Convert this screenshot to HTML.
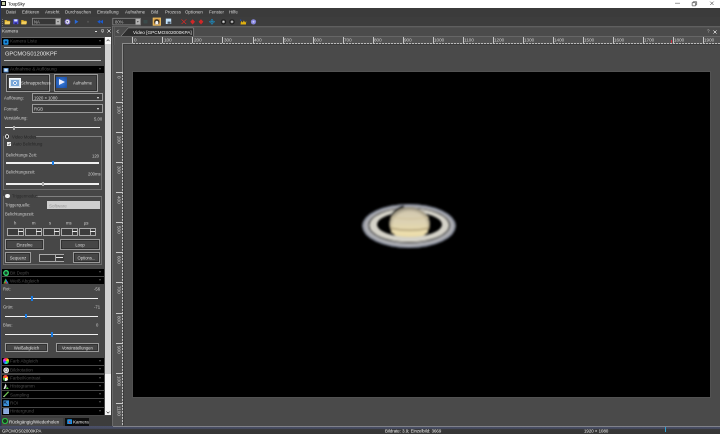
<!DOCTYPE html>
<html><head><meta charset="utf-8">
<style>
*{margin:0;padding:0;box-sizing:border-box}
html,body{width:720px;height:434px;overflow:hidden;background:#4b4b4b;font-family:"Liberation Sans",sans-serif;color:#ddd}
.a{position:absolute}
.t{position:absolute;white-space:nowrap;line-height:1;will-change:transform;transform-origin:0 0;transform:scale(.5)}
.hdr{position:absolute;left:2px;width:102px;height:7.2px;background:#000}
.hdr .t{color:#4a4a4a;font-size:9.2px;left:7.5px;top:1.5px}
.hdr .ar{position:absolute;right:3px;top:2px;width:0;height:0;border-left:1.5px solid transparent;border-right:1.5px solid transparent;border-top:2px solid #555}
.btn{position:absolute;border:1px solid #9a9a9a;background:#464646;box-shadow:inset 0 0 0 1px #303030}
.btn .t{width:200%;text-align:center;color:#ddd;font-size:8.4px}
.trk{position:absolute;height:1.3px;background:#f0f0f0}
.lbl{position:absolute;will-change:transform;transform-origin:0 0;transform:scale(.5);white-space:nowrap;line-height:1;font-size:8.4px;color:#cfcfcf}
</style></head><body><div id="root" class="a" style="left:0;top:0;width:720px;height:434px">
<!-- title bar -->
<div class="a" style="left:0;top:0;width:720px;height:8px;background:#fff"></div>
<div class="a" style="left:1.2px;top:1.2px;width:4.6px;height:4.6px;background:#111"></div>
<div class="a" style="left:2.3px;top:2.3px;width:2.4px;height:2.4px;background:#c8d0a8"></div>
<div class="t" style="left:8.3px;top:1.6px;font-size:8.80px;color:#2a2a2a;-webkit-text-stroke:0.15px #2a2a2a">ToupSky</div>
<svg class="a" style="left:670px;top:0" width="50" height="8">
  <path d="M5 3.3 h5" stroke="#555" stroke-width="0.6"/>
  <path d="M22.2 2.6 h3.4 v3.2 h-3.4z" stroke="#444" stroke-width="0.65" fill="none"/>
  <path d="M23.2 2.6 v-0.9 h3.4 v3.2 h-1" stroke="#444" stroke-width="0.65" fill="none"/>
  <path d="M40.2 1.6 l3.4 3.4 M43.6 1.6 l-3.4 3.4" stroke="#444" stroke-width="0.65"/>
</svg>
<!-- menu + toolbar -->
<div class="a" style="left:0;top:8px;width:720px;height:9px;background:#3b3b3b"></div>
<div class="a" style="left:0;top:17px;width:720px;height:10px;background:#3d3d3d"></div>
<div class="a" style="left:0;top:0;width:1.2px;height:426px;background:#25335e"></div>
<div class="t" style="top:9.9px;left:6px;font-size:8.60px;color:#d8d8d8">Datei</div>
<div class="t" style="top:9.9px;left:22px;font-size:8.80px;color:#d8d8d8">Editieren</div>
<div class="t" style="top:9.9px;left:45px;font-size:8.80px;color:#d8d8d8">Ansicht</div>
<div class="t" style="top:9.9px;left:65px;font-size:8.80px;color:#d8d8d8">Durchsuchen</div>
<div class="t" style="top:9.9px;left:97px;font-size:8.80px;color:#d8d8d8">Einstellung</div>
<div class="t" style="top:9.9px;left:125px;font-size:8.80px;color:#d8d8d8">Aufnahme</div>
<div class="t" style="top:9.9px;left:151px;font-size:8.80px;color:#d8d8d8">Bild</div>
<div class="t" style="top:9.9px;left:164.5px;font-size:8.80px;color:#d8d8d8">Prozess</div>
<div class="t" style="top:9.9px;left:185px;font-size:8.80px;color:#d8d8d8">Optionen</div>
<div class="t" style="top:9.9px;left:209px;font-size:8.80px;color:#d8d8d8">Fenster</div>
<div class="t" style="top:9.9px;left:229px;font-size:8.80px;color:#d8d8d8">Hilfe</div>

<!-- toolbar icons -->
<div class="a" style="left:2px;top:18.5px;width:0.8px;height:7px;background:repeating-linear-gradient(#777 0 1px,transparent 1px 2px)"></div>
<svg class="a" style="left:0;top:15px" width="270" height="13" viewBox="0 15 270 13">
  <!-- folder -->
  <path d="M4.6 20 h2 l0.8 0.8 h2.4 v3.4 h-5.2z" fill="#d8a820"/><path d="M5.2 21.6 h5.2 l-0.8 2.6 h-4.8z" fill="#f4d060"/>
  <!-- save -->
  <rect x="13.2" y="19.2" width="5.2" height="5" fill="#5050d8"/><rect x="14.2" y="19.4" width="3.2" height="2" fill="#e0e8ff"/><rect x="14.6" y="22.6" width="2.4" height="1.6" fill="#2a2a80"/>
  <!-- folder 2 -->
  <path d="M21.2 20 h2 l0.8 0.8 h2.4 v3.4 h-5.2z" fill="#d8a820"/><path d="M21.8 21.6 h5.2 l-0.8 2.6 h-4.8z" fill="#f4d060"/>
  <!-- combo NA -->
  <rect x="32.5" y="18.3" width="28" height="6.6" fill="#373737" stroke="#8c8c8c" stroke-width="0.8"/>
  <rect x="55.6" y="18.8" width="4.6" height="5.8" fill="#b4b4b4"/>
  <path d="M57 21.3 h2 l-1 1.2z" fill="#333"/>
  <!-- circle icon -->
  <circle cx="67.5" cy="21.8" r="2.5" fill="#e8e8f4" stroke="#7060c8" stroke-width="0.9"/><circle cx="67.3" cy="21.8" r="0.8" fill="#505070"/>
  <!-- play -->
  <path d="M74.8 19.6 l3.6 2.2 l-3.6 2.3z" fill="#2a6ad8"/>
  <circle cx="88" cy="21.8" r="1" fill="#555"/>
  <!-- rewind -->
  <path d="M97.2 21.8 l3 -2 v4z M100 21.8 l3 -2 v4z" fill="#1a5ad0"/>
  <!-- combo 80 -->
  <rect x="112.8" y="18.3" width="27.6" height="6.6" fill="#373737" stroke="#8c8c8c" stroke-width="0.8"/>
  <rect x="135.5" y="18.8" width="4.6" height="5.8" fill="#b4b4b4"/>
  <path d="M136.8 21.3 h2 l-1 1.2z" fill="#333"/>
  <rect x="143.5" y="20" width="4" height="3.5" fill="#3a4a4a"/>
  <!-- orange highlighted -->
  <rect x="152.7" y="17.6" width="8.2" height="8.1" fill="#f0c060"/>
  <rect x="153.7" y="18.6" width="6.2" height="6.1" fill="#c89040"/>
  <circle cx="156.8" cy="21.8" r="2.6" fill="#3a3020"/>
  <path d="M155.3 24.4 v-2.2 a1.5 1.5 0 0 1 3 0 v2.2z" fill="#f4f4f4"/>
  <!-- light blue icon -->
  <rect x="165.8" y="18.6" width="5.4" height="5.4" fill="#c0e0fa"/><rect x="167.6" y="21.6" width="3" height="2.2" fill="#4a5868"/>
  <!-- red x -->
  <path d="M181.6 19.4 l4.6 4.6 M186.2 19.4 l-4.6 4.6" stroke="#d02828" stroke-width="1"/>
  <path d="M192.6 19.2 l2.4 2.6 l-2.4 2.6 l-2.4 -2.6z" fill="#d02828"/>
  <path d="M201 19.2 l2.4 2.6 l-2.4 2.6 l-2.4 -2.6z" fill="#d02828"/>
  <!-- blue cross -->
  <path d="M212 18.8 l1.4 1.6 h-2.8z M212 24.8 l1.4 -1.6 h-2.8z M209 21.8 l1.6 -1.4 v2.8z M215 21.8 l-1.6 -1.4 v2.8z" fill="#1a90c8"/><rect x="211.2" y="21" width="1.6" height="1.6" fill="#1a90c8"/>
  <circle cx="223.5" cy="21.8" r="2.1" fill="#888" stroke="#1e1e1e" stroke-width="1.1"/><circle cx="223.5" cy="21.8" r="0.7" fill="#ddd"/>
  <circle cx="232" cy="21.8" r="2.1" fill="#888" stroke="#1e1e1e" stroke-width="1.1"/><circle cx="232" cy="21.8" r="0.7" fill="#ddd"/>
  <!-- yellow crown -->
  <path d="M240.5 24.6 l0.6 -3.6 l1.6 1.4 l1.2 -2 l1.2 2 l1.2 -1.4 l-0.4 3.6z" fill="#e0b010"/>
  <rect x="240" y="19.6" width="1.2" height="1.2" fill="#2050c0"/>
  <circle cx="253.5" cy="21.8" r="2.6" fill="#8888e0"/><circle cx="253.5" cy="21.8" r="1" fill="#c8c8f8"/>
</svg>
<div class="t" style="left:34px;top:19.8px;font-size:8.40px;color:#bbb">NA</div>
<div class="t" style="left:114.5px;top:19.8px;font-size:8.40px;color:#bbb">80%</div>
<!-- left panel -->
<div class="a" style="left:1.5px;top:26.5px;width:111px;height:399px;background:#474747"></div>
<div class="a" style="left:1.5px;top:26.5px;width:111px;height:1px;background:#6a6a6a"></div>
<div class="t" style="left:1.5px;top:29.2px;font-size:9.20px;color:#ddd">Kamera</div>
<div class="a" style="left:94.7px;top:30.6px;width:2.6px;height:1.2px;background:#e0e0e0"></div>
<svg class="a" style="left:100.5px;top:29px" width="3.5" height="4"><path d="M0.6 0.6 h2 v2.2 h-2z M1.6 2.8 v1" stroke="#bbb" stroke-width="0.7" fill="none"/></svg>
<svg class="a" style="left:106.6px;top:29.2px" width="4" height="4"><path d="M0.4 0.4 l3.2 3.2 M3.6 0.4 l-3.2 3.2" stroke="#e0e0e0" stroke-width="0.8"/></svg>
<div class="a" style="left:1.5px;top:36.5px;width:111px;height:1px;background:#6a6a6a"></div>

<!-- scrollbar -->
<div class="a" style="left:104.9px;top:37px;width:6.2px;height:378px;background:#f6f6f6"></div>
<div class="a" style="left:104.9px;top:43.7px;width:6.2px;height:330.8px;background:#d2d2d2"></div>
<svg class="a" style="left:104.9px;top:37px" width="6.2" height="6.6"><path d="M1.6 4.2 L3.1 2.6 L4.6 4.2" stroke="#555" stroke-width="1" fill="none"/></svg>
<svg class="a" style="left:104.9px;top:408.5px" width="6.2" height="6.6"><path d="M1.6 2.6 L3.1 4.2 L4.6 2.6" stroke="#555" stroke-width="1" fill="none"/></svg>
<div class="a" style="left:111px;top:27px;width:2px;height:399px;background:#3a3a3a"></div>


<!-- ===== left panel content ===== -->
<div class="hdr" style="top:37.80px"><svg class="a" style="left:0.8px;top:0.8px" width="6" height="6"><rect x="0.3" y="0.3" width="5.2" height="5.4" rx="1" fill="#1e90e0"/><circle cx="2.9" cy="3" r="1.2" fill="#0a3a70"/></svg><div class="t">Kamera Liste</div><div class="ar"></div></div>
<div class="a" style="left:4.3px;top:47px;width:96.7px;height:1px;background:#bdbdbd"></div>
<div class="t" style="left:4.5px;top:51.2px;font-size:11.4px;color:#e8e8e8">GPCMOS01200KPF</div>
<div class="a" style="left:4.3px;top:60px;width:96.7px;height:1px;background:#bdbdbd"></div>

<div class="hdr" style="top:65.80px"><svg class="a" style="left:0.8px;top:0.8px" width="6" height="6"><rect x="0.5" y="1" width="5" height="4.4" fill="#5a90d0"/><rect x="1.4" y="1.8" width="3.2" height="2.6" fill="#d0e4f4"/></svg><div class="t">Aufnahme &amp; Auflösung</div><div class="ar"></div></div>

<div class="btn" style="left:6px;top:74px;width:44px;height:18px"></div>
<div class="a" style="left:9.3px;top:77.5px;width:11.5px;height:10px;background:#d8e4ee;border:1px solid #f4f8fc"></div><div class="a" style="left:11px;top:80px;width:8px;height:6px;background:#7aa8d8"></div><div class="a" style="left:13px;top:81px;width:4px;height:4px;border-radius:50%;background:#2a70c8;border:0.6px solid #fff"></div>
<div class="t" style="left:21.3px;top:80.6px;font-size:8.40px;color:#ddd">Schnappschuss</div>
<div class="btn" style="left:53.5px;top:74px;width:44px;height:18px"></div>
<div class="a" style="left:56px;top:77px;width:11px;height:11px;background:radial-gradient(#3a80e0,#1a4aa0)"></div>
<div class="a" style="left:59px;top:79px;width:0;height:0;border-top:3.5px solid transparent;border-bottom:3.5px solid transparent;border-left:6px solid #eef"></div>
<div class="t" style="left:73px;top:80.6px;font-size:8.40px;color:#ddd">Aufnahme</div>

<div class="lbl" style="left:4px;top:95.5px">Auflösung:</div>
<div class="a" style="left:31.8px;top:93.2px;width:71px;height:8.3px;border:1px solid #9a9a9a;background:#3c3c3c"></div>
<div class="t" style="left:33.5px;top:95.5px;font-size:8.40px;color:#ddd">1920 × 1080</div>
<div class="a" style="left:97px;top:97px;width:0;height:0;border-left:1.8px solid transparent;border-right:1.8px solid transparent;border-top:2px solid #eee"></div>
<div class="lbl" style="left:4px;top:106.5px">Format:</div>
<div class="a" style="left:31.8px;top:104.3px;width:71px;height:8.3px;border:1px solid #9a9a9a;background:#3c3c3c"></div>
<div class="t" style="left:33.5px;top:106.5px;font-size:8.40px;color:#ddd">RGB</div>
<div class="a" style="left:97px;top:108px;width:0;height:0;border-left:1.8px solid transparent;border-right:1.8px solid transparent;border-top:2px solid #eee"></div>

<div class="lbl" style="left:4px;top:116px">Verstärkung:</div>
<div class="lbl" style="left:93.5px;top:116.5px">5,00</div>
<div class="trk" style="left:5px;top:127.2px;width:95px"></div>
<div class="a" style="left:12.5px;top:125.5px;width:2px;height:4px;background:#aaa"></div>

<!-- group Video Modus -->
<div class="a" style="left:3px;top:136px;width:98.5px;height:53.5px;border:0.9px solid #6e6e6e;border-top-color:#808080"></div>
<div class="a" style="left:2.5px;top:133.5px;width:33.5px;height:5px;background:#474747"></div>
<div class="a" style="left:3px;top:136px;width:0.9px;height:3px;background:#6e6e6e"></div>
<div class="a" style="left:4.9px;top:134.1px;width:4.6px;height:4.6px;border-radius:50%;border:0.9px solid #e0e0e0;background:#3a3a3a"></div>
<div class="a" style="left:6.5px;top:135.7px;width:1.4px;height:1.4px;border-radius:50%;background:#000"></div>
<div class="lbl" style="left:11.7px;top:134.6px;color:#262626">Video Modus</div>
<div class="a" style="left:7px;top:142.1px;width:4.2px;height:4.2px;background:#f0f0f0"></div>
<svg class="a" style="left:7px;top:142.1px" width="4.2" height="4.2"><path d="M0.9 2.2 L1.8 3.1 L3.4 1" stroke="#333" stroke-width="0.6" fill="none"/></svg>
<div class="lbl" style="left:12.5px;top:142.3px;color:#262626">Auto Belichtung</div>
<div class="lbl" style="left:6px;top:153px">Belichtungs Zeit:</div>
<div class="lbl" style="left:92.3px;top:154px">120</div>
<div class="trk" style="left:6px;top:162.4px;width:93px"></div>
<div class="a" style="left:52px;top:160.5px;width:2px;height:4.5px;background:#1a7ae0"></div>
<div class="lbl" style="left:6px;top:170px">Belichtungszeit:</div>
<div class="lbl" style="left:88px;top:172px">200ms</div>
<div class="trk" style="left:6px;top:183.4px;width:93px"></div>
<div class="a" style="left:42px;top:181.5px;width:2px;height:4px;background:#aaa"></div>

<!-- group Trigger Modus -->
<div class="a" style="left:3px;top:196px;width:98.5px;height:68.5px;border:0.9px solid #6e6e6e;border-top-color:#808080"></div>
<div class="a" style="left:2.5px;top:193.5px;width:33.5px;height:5px;background:#474747"></div>
<div class="a" style="left:3px;top:196px;width:0.9px;height:3px;background:#6e6e6e"></div>
<div class="a" style="left:5px;top:193.8px;width:4.6px;height:4.6px;border-radius:50%;background:#f8f8f8"></div>
<div class="lbl" style="left:11.7px;top:194.3px;color:#2a2a2a">Triggermodus</div>
<div class="lbl" style="left:5px;top:202.5px">Triggerquelle:</div>
<div class="a" style="left:47px;top:201px;width:53px;height:8.4px;background:#cfcfcf"></div>
<div class="t" style="left:49px;top:203.5px;font-size:9.00px;color:#999">Software</div>
<div class="lbl" style="left:5px;top:212px">Belichtungszeit:</div>
<div class="lbl" style="left:13.5px;top:220.5px">h</div>
<div class="lbl" style="left:31.5px;top:220.5px">m</div>
<div class="lbl" style="left:48.5px;top:220.5px">s</div>
<div class="lbl" style="left:65.5px;top:220.5px">ms</div>
<div class="lbl" style="left:84px;top:220.5px">µs</div>
<div class="a" style="left:7px;top:227.6px;width:17px;height:8.3px;border:1px solid #aaa;background:#3c3c3c"></div><div class="a" style="left:17.5px;top:228.6px;width:5.5px;height:6.3px;background:#3c3c3c;border-left:1px solid #aaa"></div><div class="a" style="left:18px;top:231.3px;width:5px;height:1px;background:#e8e8e8"></div><div class="a" style="left:25px;top:227.6px;width:17px;height:8.3px;border:1px solid #aaa;background:#3c3c3c"></div><div class="a" style="left:35.5px;top:228.6px;width:5.5px;height:6.3px;background:#3c3c3c;border-left:1px solid #aaa"></div><div class="a" style="left:36px;top:231.3px;width:5px;height:1px;background:#e8e8e8"></div><div class="a" style="left:43px;top:227.6px;width:17px;height:8.3px;border:1px solid #aaa;background:#3c3c3c"></div><div class="a" style="left:53.5px;top:228.6px;width:5.5px;height:6.3px;background:#3c3c3c;border-left:1px solid #aaa"></div><div class="a" style="left:54px;top:231.3px;width:5px;height:1px;background:#e8e8e8"></div><div class="a" style="left:61px;top:227.6px;width:17px;height:8.3px;border:1px solid #aaa;background:#3c3c3c"></div><div class="a" style="left:71.5px;top:228.6px;width:5.5px;height:6.3px;background:#3c3c3c;border-left:1px solid #aaa"></div><div class="a" style="left:72px;top:231.3px;width:5px;height:1px;background:#e8e8e8"></div><div class="a" style="left:79px;top:227.6px;width:17px;height:8.3px;border:1px solid #aaa;background:#3c3c3c"></div><div class="a" style="left:89.5px;top:228.6px;width:5.5px;height:6.3px;background:#3c3c3c;border-left:1px solid #aaa"></div><div class="a" style="left:90px;top:231.3px;width:5px;height:1px;background:#e8e8e8"></div>
<div class="btn" style="left:4.5px;top:239.4px;width:39px;height:10.3px"><div class="t" style="top:3px">Einzelne</div></div>
<div class="btn" style="left:60px;top:239.4px;width:40px;height:10.3px"><div class="t" style="top:3px">Loop</div></div>
<div class="btn" style="left:4.5px;top:252px;width:26px;height:11px"><div class="t" style="top:3.3px">Sequenz</div></div>
<div class="a" style="left:38.7px;top:254px;width:25.5px;height:7.5px;border:1px solid #aaa;background:#3c3c3c"></div>
<div class="a" style="left:55px;top:255px;width:8.5px;height:5.5px;background:#3c3c3c;border-left:1px solid #aaa"></div>
<div class="a" style="left:56px;top:257.3px;width:7px;height:1px;background:#e8e8e8"></div>
<div class="btn" style="left:73px;top:252px;width:27px;height:11px"><div class="t" style="top:3.3px">Options...</div></div>

<div class="hdr" style="top:269.00px"><svg class="a" style="left:0.6px;top:0.6px" width="6" height="6"><circle cx="3" cy="3" r="2.3" fill="#1a3a2a" stroke="#30e070" stroke-width="1.2"/></svg><div class="t">Bit Depth</div><div class="ar"></div></div>
<div class="hdr" style="top:277.20px"><svg class="a" style="left:0.6px;top:0.6px" width="6" height="6"><path d="M0.3 5.6 L2.6 0.4 L5.6 5.6z" fill="#40c040"/><path d="M2.6 0.4 L5.6 5.6 L3.2 5.6z" fill="#2a70e0"/><path d="M1 5.6 L3 3.5 L4.6 5.6z" fill="#e03030"/></svg><div class="t">Weiß Abgleich</div><div class="ar"></div></div>

<div class="lbl" style="left:3px;top:287px">Rot:</div>
<div class="lbl" style="left:94px;top:287px">-56</div>
<div class="trk" style="left:5px;top:297.8px;width:93px"></div>
<div class="a" style="left:31px;top:296px;width:2px;height:4.5px;background:#1a7ae0"></div>
<div class="lbl" style="left:3px;top:305px">Grün:</div>
<div class="lbl" style="left:94px;top:305px">-71</div>
<div class="trk" style="left:5px;top:315.5px;width:93px"></div>
<div class="a" style="left:25px;top:313.5px;width:2px;height:4.5px;background:#1a7ae0"></div>
<div class="lbl" style="left:3px;top:323px">Blau:</div>
<div class="lbl" style="left:96px;top:323px">0</div>
<div class="trk" style="left:5px;top:333.8px;width:93px"></div>
<div class="a" style="left:50.5px;top:332px;width:2px;height:4.5px;background:#1a7ae0"></div>

<div class="btn" style="left:5px;top:343.3px;width:43px;height:8.5px"><div class="t" style="top:1.6px">Weißabgleich</div></div>
<div class="btn" style="left:56.4px;top:343.3px;width:42.6px;height:8.5px"><div class="t" style="top:1.6px">Voreinstellungen</div></div>
<div class="hdr" style="top:357.90px"><div class="a" style="left:0.8px;top:0.5px;width:5.8px;height:5.8px;border-radius:50%;background:conic-gradient(#ff3030,#ffe020,#30e030,#20e0e0,#3040ff,#ff30ff,#ff3030)"></div><div class="t">Farb Abgleich</div><div class="ar"></div></div>
<div class="hdr" style="top:366.20px"><svg class="a" style="left:0.6px;top:0.4px" width="6.4" height="6.4"><circle cx="3.2" cy="3.2" r="2.8" fill="#e8e8e8"/><circle cx="3.2" cy="3.2" r="1.5" fill="none" stroke="#666" stroke-width="0.6"/></svg><div class="t">Bildrotation</div><div class="ar"></div></div>
<div class="hdr" style="top:374.50px"><div class="a" style="left:0.6px;top:0.5px;width:5.8px;height:5.8px;border-radius:50%;background:conic-gradient(#ff4040 0 60deg,#ffd020 60deg 110deg,#fff 110deg 190deg,#50c050 190deg 260deg,#e06020 260deg 360deg)"></div><div class="t">Farbe/Kontrast</div><div class="ar"></div></div>
<div class="hdr" style="top:382.80px"><svg class="a" style="left:0.6px;top:0.5px" width="6.4" height="6.4"><path d="M0.5 6 L2.6 0.6 L3.6 3 L2.2 6z" fill="#ddd"/><path d="M3 6 L3.9 3.4 L5.8 6z" fill="#50c040"/></svg><div class="t">Histogramm</div><div class="ar"></div></div>
<div class="hdr" style="top:391.10px"><svg class="a" style="left:0.6px;top:0.4px" width="6.4" height="6.4"><path d="M0.8 5.8 L5.6 0.8" stroke="#6ac050" stroke-width="1.3"/><path d="M0.6 6 L1.2 4.8" stroke="#ddd" stroke-width="0.8"/></svg><div class="t">Sampling</div><div class="ar"></div></div>
<div class="hdr" style="top:399.40px"><svg class="a" style="left:0.6px;top:0.4px" width="6.4" height="6.4"><rect x="0.4" y="0.4" width="5.6" height="5.6" fill="#3a90d8"/><path d="M1.6 1.8 L4.2 4.6 M1.6 1.8 v1.6 M1.6 1.8 h1.6" stroke="#102040" stroke-width="0.8" fill="none"/></svg><div class="t">ROI</div><div class="ar"></div></div>
<div class="hdr" style="top:407.70px"><svg class="a" style="left:0.6px;top:0.4px" width="6.4" height="6.4"><rect x="0.3" y="0.3" width="5.8" height="5.8" fill="#a8c4ec"/><rect x="0.8" y="0.8" width="4.8" height="4.8" fill="#88a8dc"/></svg><div class="t">Hintergrund</div><div class="ar"></div></div>

<!-- bottom tabs -->
<div class="a" style="left:1.2px;top:414.8px;width:110px;height:11.2px;background:#3c3c3c"></div>
<div class="a" style="left:1.2px;top:414.8px;width:110px;height:1.6px;background:#474747"></div>
<div class="a" style="left:1.5px;top:417.5px;width:61.5px;height:8.5px;background:#474747"></div>
<div class="a" style="left:2.2px;top:418.4px;width:5.4px;height:5.4px;border-radius:50%;border:1.5px solid #28e048;background:#1a3a20"></div>
<div class="t" style="left:9px;top:419.6px;font-size:9.00px;color:#e8e8e8">Rückgängig/Wiederholen</div>
<div class="a" style="left:65px;top:417.8px;width:24px;height:7.8px;background:#0c0c0c"></div>
<svg class="a" style="left:66.8px;top:418.6px" width="5.4" height="5.8"><rect x="0.2" y="0.3" width="5" height="5.2" rx="0.8" fill="#1a90e0"/><circle cx="2.6" cy="2.9" r="1" fill="#d04040"/></svg>
<div class="t" style="left:73px;top:419.8px;font-size:9.00px;color:#e8e8e8">Kamera</div>

<!-- ===== video area ===== -->
<div class="a" style="left:111.5px;top:26px;width:1px;height:400px;background:#6a6a6a"></div>
<div class="a" style="left:113px;top:26px;width:607px;height:1px;background:#626262"></div>
<div class="a" style="left:113.5px;top:27px;width:1px;height:399px;background:#5a5a5a"></div>
<svg class="a" style="left:115.8px;top:29.2px" width="4" height="5"><path d="M2.6 0.8 L1 2.5 L2.6 4.2" stroke="#d8d8d8" stroke-width="0.8" fill="none"/></svg>
<svg class="a" style="left:113px;top:26px" width="607" height="12">
  <polygon points="7.6,10.6 15.3,1.8 80.6,1.8 80.6,10.6" fill="#2e2e2e"/>
  <polyline points="7.6,10.6 15.3,1.8 80.6,1.8 80.6,10.6" fill="none" stroke="#8a8a8a" stroke-width="0.8"/><path d="M80.6 1.2 H607" stroke="#5a5a5a" stroke-width="0.8"/>
</svg>
<div class="t" style="left:133.3px;top:29.5px;font-size:9.40px;color:#f4f4f4">Video [GPCMOS02000KPA]</div>
<div class="t" style="left:706.5px;top:29.3px;font-size:9.20px;color:#ccc">?</div>
<svg class="a" style="left:713.4px;top:29.5px" width="4" height="4"><path d="M0.4 0.4 l3.2 3.2 M3.6 0.4 l-3.2 3.2" stroke="#e8e8e8" stroke-width="0.8"/></svg>
<!-- top ruler -->
<div class="a" style="left:114.5px;top:36.6px;width:605.5px;height:8px;background:#525252"></div>
<div class="a" style="left:114.5px;top:36.3px;width:605.5px;height:0.8px;background:#666"></div>
<div class="a" style="left:122px;top:43px;width:10.5px;height:1px;background:#8c8c8c"></div>
<div class="a" style="left:132.5px;top:43px;width:588px;height:1px;background:repeating-linear-gradient(90deg,#bcbcbc 0 1.7px,#5c5c5c 1.7px 3px)"></div>
<div class="a" style="left:132.30px;top:37.3px;width:0.8px;height:6px;background:#c8c8c8"></div><div class="t" style="left:133.50px;top:38.3px;font-size:9.20px;color:#d0d0d0">0</div><div class="a" style="left:162.35px;top:37.3px;width:0.8px;height:6px;background:#c8c8c8"></div><div class="t" style="left:163.55px;top:38.3px;font-size:9.20px;color:#d0d0d0">100</div><div class="a" style="left:192.40px;top:37.3px;width:0.8px;height:6px;background:#c8c8c8"></div><div class="t" style="left:193.60px;top:38.3px;font-size:9.20px;color:#d0d0d0">200</div><div class="a" style="left:222.45px;top:37.3px;width:0.8px;height:6px;background:#c8c8c8"></div><div class="t" style="left:223.65px;top:38.3px;font-size:9.20px;color:#d0d0d0">300</div><div class="a" style="left:252.50px;top:37.3px;width:0.8px;height:6px;background:#c8c8c8"></div><div class="t" style="left:253.70px;top:38.3px;font-size:9.20px;color:#d0d0d0">400</div><div class="a" style="left:282.55px;top:37.3px;width:0.8px;height:6px;background:#c8c8c8"></div><div class="t" style="left:283.75px;top:38.3px;font-size:9.20px;color:#d0d0d0">500</div><div class="a" style="left:312.60px;top:37.3px;width:0.8px;height:6px;background:#c8c8c8"></div><div class="t" style="left:313.80px;top:38.3px;font-size:9.20px;color:#d0d0d0">600</div><div class="a" style="left:342.65px;top:37.3px;width:0.8px;height:6px;background:#c8c8c8"></div><div class="t" style="left:343.85px;top:38.3px;font-size:9.20px;color:#d0d0d0">700</div><div class="a" style="left:372.70px;top:37.3px;width:0.8px;height:6px;background:#c8c8c8"></div><div class="t" style="left:373.90px;top:38.3px;font-size:9.20px;color:#d0d0d0">800</div><div class="a" style="left:402.75px;top:37.3px;width:0.8px;height:6px;background:#c8c8c8"></div><div class="t" style="left:403.95px;top:38.3px;font-size:9.20px;color:#d0d0d0">900</div><div class="a" style="left:432.80px;top:37.3px;width:0.8px;height:6px;background:#c8c8c8"></div><div class="t" style="left:434.00px;top:38.3px;font-size:9.20px;color:#d0d0d0">1000</div><div class="a" style="left:462.85px;top:37.3px;width:0.8px;height:6px;background:#c8c8c8"></div><div class="t" style="left:464.05px;top:38.3px;font-size:9.20px;color:#d0d0d0">1100</div><div class="a" style="left:492.90px;top:37.3px;width:0.8px;height:6px;background:#c8c8c8"></div><div class="t" style="left:494.10px;top:38.3px;font-size:9.20px;color:#d0d0d0">1200</div><div class="a" style="left:522.95px;top:37.3px;width:0.8px;height:6px;background:#c8c8c8"></div><div class="t" style="left:524.15px;top:38.3px;font-size:9.20px;color:#d0d0d0">1300</div><div class="a" style="left:553.00px;top:37.3px;width:0.8px;height:6px;background:#c8c8c8"></div><div class="t" style="left:554.20px;top:38.3px;font-size:9.20px;color:#d0d0d0">1400</div><div class="a" style="left:583.05px;top:37.3px;width:0.8px;height:6px;background:#c8c8c8"></div><div class="t" style="left:584.25px;top:38.3px;font-size:9.20px;color:#d0d0d0">1500</div><div class="a" style="left:613.10px;top:37.3px;width:0.8px;height:6px;background:#c8c8c8"></div><div class="t" style="left:614.30px;top:38.3px;font-size:9.20px;color:#d0d0d0">1600</div><div class="a" style="left:643.15px;top:37.3px;width:0.8px;height:6px;background:#c8c8c8"></div><div class="t" style="left:644.35px;top:38.3px;font-size:9.20px;color:#d0d0d0">1700</div><div class="a" style="left:673.20px;top:37.3px;width:0.8px;height:6px;background:#c8c8c8"></div><div class="t" style="left:674.40px;top:38.3px;font-size:9.20px;color:#d0d0d0">1800</div><div class="a" style="left:703.25px;top:37.3px;width:0.8px;height:6px;background:#c8c8c8"></div><div class="t" style="left:704.45px;top:38.3px;font-size:9.20px;color:#d0d0d0">1900</div>
<div class="a" style="left:670.8px;top:40px;width:1px;height:2.8px;background:#c83040"></div>
<!-- left ruler -->
<div class="a" style="left:113px;top:44.5px;width:9.5px;height:381px;background:#525252"></div>
<div class="a" style="left:122px;top:44px;width:1px;height:28px;background:#8c8c8c"></div>
<div class="a" style="left:122px;top:72.2px;width:1px;height:353.5px;background:repeating-linear-gradient(180deg,#bcbcbc 0 1.7px,#5c5c5c 1.7px 3px)"></div>
<div class="a" style="left:123px;top:44px;width:597px;height:381.6px;background:#4a4a4a"></div><div class="a" style="left:123px;top:44px;width:1px;height:381.6px;background:#3c3c3c"></div><div class="a" style="left:123px;top:44px;width:597px;height:1px;background:#3c3c3c"></div>
<div class="a" style="left:115.5px;top:72.10px;width:7px;height:0.8px;background:#c8c8c8"></div><div class="t" style="left:120.5px;top:75.90px;font-size:9.20px;color:#d0d0d0;transform-origin:0 0;transform:scale(.5) rotate(90deg)">0</div><div class="a" style="left:115.5px;top:102.15px;width:7px;height:0.8px;background:#c8c8c8"></div><div class="t" style="left:120.5px;top:105.95px;font-size:9.20px;color:#d0d0d0;transform-origin:0 0;transform:scale(.5) rotate(90deg)">100</div><div class="a" style="left:115.5px;top:132.20px;width:7px;height:0.8px;background:#c8c8c8"></div><div class="t" style="left:120.5px;top:136.00px;font-size:9.20px;color:#d0d0d0;transform-origin:0 0;transform:scale(.5) rotate(90deg)">200</div><div class="a" style="left:115.5px;top:162.25px;width:7px;height:0.8px;background:#c8c8c8"></div><div class="t" style="left:120.5px;top:166.05px;font-size:9.20px;color:#d0d0d0;transform-origin:0 0;transform:scale(.5) rotate(90deg)">300</div><div class="a" style="left:115.5px;top:192.30px;width:7px;height:0.8px;background:#c8c8c8"></div><div class="t" style="left:120.5px;top:196.10px;font-size:9.20px;color:#d0d0d0;transform-origin:0 0;transform:scale(.5) rotate(90deg)">400</div><div class="a" style="left:115.5px;top:222.35px;width:7px;height:0.8px;background:#c8c8c8"></div><div class="t" style="left:120.5px;top:226.15px;font-size:9.20px;color:#d0d0d0;transform-origin:0 0;transform:scale(.5) rotate(90deg)">500</div><div class="a" style="left:115.5px;top:252.40px;width:7px;height:0.8px;background:#c8c8c8"></div><div class="t" style="left:120.5px;top:256.20px;font-size:9.20px;color:#d0d0d0;transform-origin:0 0;transform:scale(.5) rotate(90deg)">600</div><div class="a" style="left:115.5px;top:282.45px;width:7px;height:0.8px;background:#c8c8c8"></div><div class="t" style="left:120.5px;top:286.25px;font-size:9.20px;color:#d0d0d0;transform-origin:0 0;transform:scale(.5) rotate(90deg)">700</div><div class="a" style="left:115.5px;top:312.50px;width:7px;height:0.8px;background:#c8c8c8"></div><div class="t" style="left:120.5px;top:316.30px;font-size:9.20px;color:#d0d0d0;transform-origin:0 0;transform:scale(.5) rotate(90deg)">800</div><div class="a" style="left:115.5px;top:342.55px;width:7px;height:0.8px;background:#c8c8c8"></div><div class="t" style="left:120.5px;top:346.35px;font-size:9.20px;color:#d0d0d0;transform-origin:0 0;transform:scale(.5) rotate(90deg)">900</div><div class="a" style="left:115.5px;top:372.60px;width:7px;height:0.8px;background:#c8c8c8"></div><div class="t" style="left:120.5px;top:376.40px;font-size:9.20px;color:#d0d0d0;transform-origin:0 0;transform:scale(.5) rotate(90deg)">1000</div><div class="a" style="left:115.5px;top:402.65px;width:7px;height:0.8px;background:#c8c8c8"></div><div class="t" style="left:120.5px;top:406.45px;font-size:9.20px;color:#d0d0d0;transform-origin:0 0;transform:scale(.5) rotate(90deg)">1100</div>
<!-- image -->
<div class="a" style="left:133px;top:72px;width:577px;height:325px;background:#000;box-shadow:0 0 0 1px #525252"></div>
<svg class="a" style="left:340px;top:185px" width="140" height="85" viewBox="340 185 140 85">
  <defs>
    <filter id="bl" x="-30%" y="-30%" width="160%" height="160%"><feGaussianBlur stdDeviation="1.05"/></filter>
    <linearGradient id="pg" x1="0" y1="0" x2="0" y2="1">
      <stop offset="0" stop-color="#cfc6ae"/><stop offset="0.45" stop-color="#ddd2b2"/><stop offset="0.8" stop-color="#eadca8"/><stop offset="1" stop-color="#e0d0a0"/>
    </linearGradient>
    <radialGradient id="limb" cx="0.5" cy="0.55" r="0.55">
      <stop offset="0.75" stop-color="#000" stop-opacity="0"/><stop offset="1" stop-color="#000" stop-opacity="0.35"/>
    </radialGradient>
    <clipPath id="top"><rect x="340" y="185" width="140" height="41"/></clipPath>
    <clipPath id="bot"><rect x="340" y="225.5" width="140" height="50"/></clipPath>
  </defs>
  <g filter="url(#bl)">
    <g clip-path="url(#top)">
      <path fill-rule="evenodd" fill="#a6a7ab" d="M362.2,226 a46.8,22 0 1,0 93.6,0 a46.8,22 0 1,0 -93.6,0 Z M368.5,225.3 a40.7,17.6 0 1,0 81.4,0 a40.7,17.6 0 1,0 -81.4,0 Z"/>
      <path fill-rule="evenodd" fill="#d4d2c8" d="M369.3,225.3 a39.9,17 0 1,0 79.8,0 a39.9,17 0 1,0 -79.8,0 Z M377,224.5 a32.5,12.5 0 1,0 65,0 a32.5,12.5 0 1,0 -65,0 Z"/>
      <ellipse cx="409" cy="226" rx="45.8" ry="21.2" fill="none" stroke="#6c7690" stroke-width="1.6" opacity="0.6"/>
      <ellipse cx="409" cy="226" rx="43" ry="19.3" fill="none" stroke="#b8b8bc" stroke-width="1.4" opacity="0.6"/>
      <path d="M392 215 Q396 209 404 206.5" stroke="#141414" stroke-width="2.4" fill="none"/>
    </g>
    <ellipse cx="409.6" cy="224.1" rx="20.3" ry="17" fill="url(#pg)"/><ellipse cx="409.6" cy="224.1" rx="20.3" ry="17" fill="url(#limb)"/>
    <path d="M390.5 217 Q410 221 429 217" stroke="#d0c29c" stroke-width="1.6" fill="none" opacity="0.7"/>
    <path d="M390 228 Q410 232.5 429.5 228" stroke="#a89670" stroke-width="1.6" fill="none" opacity="0.85"/>
    <path d="M391 232 Q410 236 428 232" stroke="#efe0b0" stroke-width="2.2" fill="none" opacity="0.8"/>
    <g clip-path="url(#bot)">
      <path fill-rule="evenodd" fill="#a6a7ab" d="M362.2,226 a46.8,22 0 1,0 93.6,0 a46.8,22 0 1,0 -93.6,0 Z M368.5,225.3 a40.7,17.6 0 1,0 81.4,0 a40.7,17.6 0 1,0 -81.4,0 Z"/>
      <path fill-rule="evenodd" fill="#d4d2c8" d="M369.3,225.3 a39.9,17 0 1,0 79.8,0 a39.9,17 0 1,0 -79.8,0 Z M377,224.5 a32.5,12.5 0 1,0 65,0 a32.5,12.5 0 1,0 -65,0 Z"/>
      <ellipse cx="409" cy="226" rx="45.8" ry="21.2" fill="none" stroke="#6c7690" stroke-width="1.6" opacity="0.6"/>
      <ellipse cx="409" cy="226" rx="43" ry="19.3" fill="none" stroke="#b8b8bc" stroke-width="1.4" opacity="0.6"/>
    </g>
  </g>
</svg>

<!-- status bar -->
<div class="a" style="left:0;top:426px;width:720px;height:8px;background:linear-gradient(#4c5168 0,#454a60 2.4px,#383838 3.6px,#363636 8px)"></div>
<div class="a" style="left:113px;top:425.6px;width:607px;height:0.8px;background:#80828a"></div>
<div class="t" style="left:2px;top:428.5px;font-size:8.60px;color:#f0f0f0">GPCMOS02000KPA</div>
<div class="t" style="left:385px;top:428.5px;font-size:8.70px;color:#f4f4f4">Bildrate: 3.9; Einzelbild: 3669</div>
<div class="t" style="left:584px;top:428.5px;font-size:8.70px;color:#f4f4f4">1920 × 1080</div>
<div class="a" style="left:664.5px;top:427px;width:1.2px;height:4.5px;background:#30a0d0"></div>
</div></body></html>
